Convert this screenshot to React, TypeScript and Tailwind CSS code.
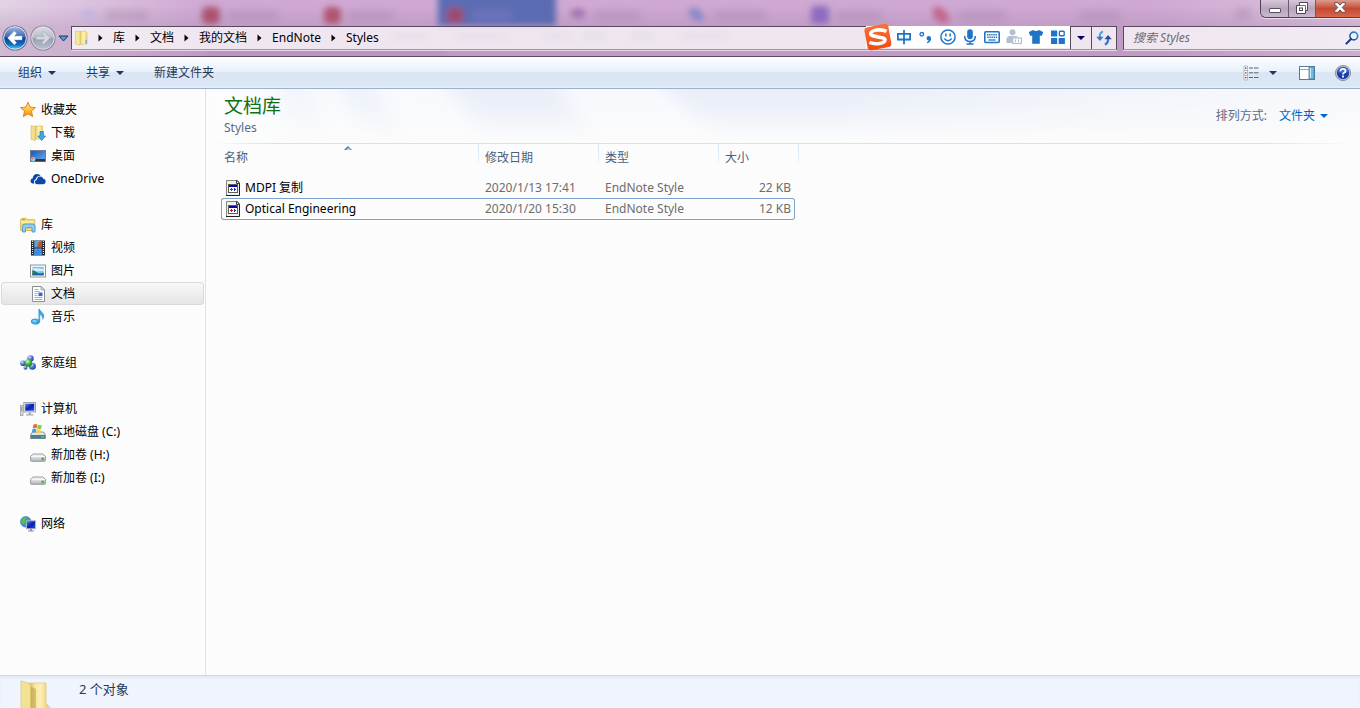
import React from "react";

type IconProps = { className?: string };

function Tri({ className = "" }: IconProps) {
  return (
    <svg viewBox="0 0 8 4" className={`h-1 w-2 shrink-0 ${className}`} aria-hidden="true">
      <path d="M0 0h8L4 4z" fill="currentColor" />
    </svg>
  );
}

function Icon({ children, className = "size-4" }: { children: React.ReactNode; className?: string }) {
  return (
    <svg viewBox="0 0 16 16" className={`shrink-0 ${className}`} aria-hidden="true">
      {children}
    </svg>
  );
}

function Gradients() {
  return (
    <svg className="absolute size-0" aria-hidden="true">
      <defs>
        <linearGradient id="folder" x1="0" x2="1" y1="0" y2="0">
          <stop offset="0" stopColor="#d9bc5c" />
          <stop offset=".3" stopColor="#f6e69c" />
          <stop offset=".6" stopColor="#fbf0b4" />
          <stop offset="1" stopColor="#ecd274" />
        </linearGradient>
        <linearGradient id="star" x1="0" x2="0" y1="0" y2="1">
          <stop offset="0" stopColor="#fff0a0" />
          <stop offset=".5" stopColor="#fdc33e" />
          <stop offset="1" stopColor="#f28a1c" />
        </linearGradient>
        <linearGradient id="screen" x1="0" x2="1" y1="0" y2="1">
          <stop offset="0" stopColor="#1c50b4" />
          <stop offset="1" stopColor="#6fb0f0" />
        </linearGradient>
        <linearGradient id="monitor" x1="0" x2="1" y1="0" y2="1">
          <stop offset="0" stopColor="#5b83ee" />
          <stop offset=".5" stopColor="#0a1fb4" />
          <stop offset="1" stopColor="#2a50d8" />
        </linearGradient>
        <linearGradient id="drive" x1="0" x2="0" y1="0" y2="1">
          <stop offset="0" stopColor="#fafafa" />
          <stop offset="1" stopColor="#b4b6bb" />
        </linearGradient>
        <linearGradient id="note" x1="0" x2="1" y1="0" y2="1">
          <stop offset="0" stopColor="#1579c4" />
          <stop offset=".6" stopColor="#45aee6" />
          <stop offset="1" stopColor="#1466a8" />
        </linearGradient>
        <radialGradient id="ball" cx=".35" cy=".3" r=".8">
          <stop offset="0" stopColor="#d6e4ff" />
          <stop offset=".5" stopColor="#4a74cc" />
          <stop offset="1" stopColor="#16348c" />
        </radialGradient>
        <radialGradient id="greenBall" cx=".4" cy=".3" r=".8">
          <stop offset="0" stopColor="#d4f7b8" />
          <stop offset=".5" stopColor="#3fae3a" />
          <stop offset="1" stopColor="#12701e" />
        </radialGradient>
        <linearGradient id="back" x1="0" x2="0" y1="0" y2="1">
          <stop offset="0" stopColor="#9fb8e2" />
          <stop offset=".45" stopColor="#3c67b8" />
          <stop offset=".5" stopColor="#0b3c92" />
          <stop offset=".8" stopColor="#1273c8" />
          <stop offset="1" stopColor="#4fd4f8" />
        </linearGradient>
        <linearGradient id="forward" x1="0" x2="0" y1="0" y2="1">
          <stop offset="0" stopColor="#dcdbe4" />
          <stop offset=".48" stopColor="#b9bcc9" />
          <stop offset=".52" stopColor="#98a1b3" />
          <stop offset="1" stopColor="#b8bfcd" />
        </linearGradient>
        <linearGradient id="sogou" x1="0" x2="0" y1="0" y2="1">
          <stop offset="0" stopColor="#f8733a" />
          <stop offset="1" stopColor="#f04a12" />
        </linearGradient>
        <linearGradient id="lens" x1="0" x2="1" y1="1" y2="0">
          <stop offset="0" stopColor="#1c3f94" />
          <stop offset="1" stopColor="#3c93d8" />
        </linearGradient>
      </defs>
    </svg>
  );
}

const StarIcon = () => (
  <Icon>
    <path d="M8 .2l2.100 4.900 5.400.5-4.100 3.600 1.300 5.400L8 11.900l-4.700 2.700 1.300-5.400L.5 5.600l5.400-.5z" fill="url(#star)" stroke="#dd7c1c" strokeWidth=".9" />
  </Icon>
);
const DownloadIcon = () => (
  <Icon>
    <path d="M5 1h7.500v13H5z" fill="url(#folder)" stroke="#d3b556" strokeWidth=".6" />
    <path d="M1 .6l3.500.9q.8.300.8 1.200V15.600L1 14.500z" fill="#f3e08e" stroke="#d3b556" strokeWidth=".6" />
    <path d="M10 6.500h3.400v4.500h2.200l-3.900 4.500L7.800 11H10z" fill="#3fa9e6" stroke="#1d76b8" strokeWidth=".7" />
  </Icon>
);
const DesktopIcon = () => (
  <Icon>
    <rect x=".5" y="2.500" width="15" height="11" fill="url(#screen)" stroke="#6d7f96" />
    <rect x="5" y="11" width="10" height="2.300" fill="#2c3442" />
    <circle cx="3.200" cy="11.200" r="2.200" fill="#7ed0f6" />
    <path d="M2 11.200h1.200V10H2z" fill="#e8642c" />
    <path d="M3.200 12.400h1.200v-1.200H3.200z" fill="#f9c93a" />
  </Icon>
);
const OneDriveIcon = () => (
  <Icon>
    <path d="M4.300 12.600H3.200C1.700 12.600.5 11.500.5 10c0-1.300.9-2.300 2.100-2.500C2.700 5 4.600 3 7 3c1.500 0 2.800.7 3.600 1.800C7.300 4.400 5.800 7 5.900 8.300 4.100 8.600 3.500 10.500 4.300 12.600z" fill="#0a48ac" />
    <path d="M7.200 13.200c-1.500 0-2.400-1-2.400-2.100 0-1.300 1-2.100 2-2.200.1-2 1.500-3.400 3.300-3.400 1.500 0 2.600.8 3.100 2.200 1.400.1 2.500 1.200 2.500 2.700 0 1.600-1.200 2.800-2.700 2.800z" fill="#0a48ac" />
  </Icon>
);
const LibraryIcon = () => (
  <Icon>
    <path d="M.6 13.500V2.500L2 1.300h4.500l1 1.400h7.300v10.800z" fill="#f4dc7c" stroke="#cfae4a" strokeWidth=".8" />
    <path d="M1 5h13.500" stroke="#fff6c8" />
    <path d="M2 2.600h3" stroke="#6cb84e" />
    <path d="M2.500 15V9.500Q2.500 7 5 7h7.500Q15 7 15 9.500V15h-3v-3.300q0-1-1-1H6.500q-1 0-1 1V15z" fill="#8fcdf2" stroke="#3f8fc6" strokeWidth=".8" />
  </Icon>
);
const VideoIcon = () => (
  <Icon>
    <rect x="1" y=".5" width="14" height="15" fill="#24262c" />
    <path d="M4.300 1h7.400v6.500H4.300z" fill="#5fa6dc" />
    <path d="M4.300 8.500h7.400V15H4.300z" fill="#4fa4f0" />
    <path d="M8.500 2.500l3.200-1.500v6H7z" fill="#b0583c" />
    <path d="M4.300 12l3-3 4.400 2L9 15H4.300z" fill="#3d8be0" />
    <path d="M2.600 1v14M13.400 1v14" stroke="#e8ecf0" strokeWidth="1.200" strokeDasharray="1 1" />
  </Icon>
);
const PictureIcon = () => (
  <Icon>
    <rect x=".5" y="2" width="15" height="12" fill="#fff" stroke="#8c949c" />
    <rect x="2.300" y="3.800" width="11.400" height="8.400" fill="#7cc4ec" />
    <path d="M2.300 5.500q4-1 11.400.8V8l-11.400.5z" fill="#d6eefa" />
    <path d="M2.300 7q3 .5 5 2.500t6.400 0v2.700H2.300z" fill="#2c7a50" />
    <path d="M2.300 11q6-1 11.400 0v1.200H2.300z" fill="#1e64a8" />
  </Icon>
);
const DocumentIcon = () => (
  <Icon>
    <path d="M2.500.5H11l3.500 3.500v11.500h-12z" fill="#fff" stroke="#8a8f96" />
    <path d="M11 .5V4h3.500z" fill="#dfe3e8" stroke="#8a8f96" strokeWidth=".7" />
    <path d="M4.500 3.500h4M4.500 5.500h5M4.500 7.500h3M4.500 9.500h3M4.500 11.500h8M4.500 13.500h8" stroke="#9aa4b4" strokeWidth=".9" />
    <rect x="8.500" y="6.500" width="4" height="3.600" fill="#2f6fc0" />
  </Icon>
);
const MusicIcon = () => (
  <Icon>
    <path d="M8.500 0h1.400c.2 2.500 4 3.300 4.200 6.500.1 1.800-.6 3.200-1.600 4.400.2-2.800-.6-4.300-2.300-5V12c0 2.100-2.200 3.700-4.900 3.700S.8 14.400.8 12.600s2-3.100 4.700-3.100c1.200 0 2.200.2 3 .7z" fill="url(#note)" />
    <ellipse cx="4.500" cy="12" rx="2.200" ry="1.100" fill="#8bd3f6" />
  </Icon>
);
const HomegroupIcon = () => (
  <Icon>
    <circle cx="3" cy="8.300" r="2.800" fill="url(#ball)" />
    <circle cx="10.500" cy="3.500" r="3.200" fill="url(#ball)" />
    <circle cx="12.400" cy="11.300" r="3.500" fill="url(#ball)" />
    <circle cx="5.500" cy="12.800" r="2" fill="url(#ball)" />
    <circle cx="8.300" cy="8" r="3.800" fill="url(#greenBall)" />
  </Icon>
);
const ComputerIcon = () => (
  <Icon>
    <rect x=".5" y="4.500" width="2.500" height="10" fill="#d9dcdf" stroke="#8e9499" strokeWidth=".7" />
    <path d="M1.700 6v4" stroke="#64b848" />
    <rect x="3.800" y="1.400" width="11.700" height="9.600" fill="#e4e6ea" stroke="#8e9499" strokeWidth=".8" />
    <rect x="5.200" y="2.700" width="9" height="7" fill="url(#monitor)" />
    <path d="M8.500 11.400h2.500v1.800h2.500v1.200H6v-1.200h2.500z" fill="#a9adb3" />
  </Icon>
);
const SystemDriveIcon = () => (
  <Icon>
    <path d="M.6 11l2-3h10.800l2 3v3.500H.6z" fill="url(#drive)" stroke="#6b7a86" strokeWidth=".8" />
    <rect x="1" y="11" width="14" height="3.500" fill="#4c7f96" />
    <path d="M11.500 12.800h2" stroke="#6fe05a" strokeWidth="1.500" />
    <path d="M3.500.5q2-1 3.800 0L6.600 4.300q-2-1-3.900 0z" fill="#ec6b35" />
    <path d="M7.900.8q2 .9 4-.1L11.100 4.700q-2 .9-4-.1z" fill="#8cc84c" />
    <path d="M2.500 5q2-.9 3.900 0L5.700 8.800q-2-1-3.900 0z" fill="#4a9be0" />
    <path d="M7 5.300q2 .9 4-.1l-.8 3.900q-2 .9-4-.1z" fill="#fbcf3c" />
  </Icon>
);
const DriveIcon = () => (
  <Icon>
    <path d="M.6 9.200l2.600-2.200h9.600l2.600 2.200v4.300q0 .8-.8.8H1.400q-.8 0-.8-.8z" fill="url(#drive)" stroke="#84868c" strokeWidth=".8" />
    <path d="M1 9.600h14" stroke="#fff" strokeWidth=".8" />
    <rect x="11.500" y="10.600" width="2.300" height="2.600" fill="#42b428" />
  </Icon>
);
const NetworkIcon = () => (
  <Icon>
    <circle cx="5.800" cy="5.800" r="5.300" fill="#3a8ede" stroke="#2b6eb4" strokeWidth=".6" />
    <path d="M2 3q3-3 5-1.500L5 4l1 2-3 2.500L1 6zM8 2l2.500 2-2 2zM5 8l2 1-1 2z" fill="#58c04c" />
    <rect x="6.500" y="4.800" width="9" height="8" fill="url(#monitor)" stroke="#b3bac4" strokeWidth=".9" />
    <path d="M10 13h2v1.500h2v1H8v-1h2z" fill="#8d939b" />
  </Icon>
);

const StyleFileIcon = () => (
  <Icon>
    <path d="M1 0h11v1h1v1h1v1h1v13H1z" fill="#f1f1ec" />
    <path d="M1.500 15.500V.5H12" fill="none" stroke="#858585" />
    <path d="M14.500 3v12.500H1" fill="none" stroke="#1e1e1e" />
    <path d="M11.500 0v3.500H15M12 1h1v1h1v1" fill="none" stroke="#3a3a3a" />
    <rect x="3" y="4" width="10" height="9" fill="#5c5c5c" />
    <rect x="4" y="5" width="8" height="2" fill="#0808a8" />
    <rect x="4" y="7" width="8" height="5" fill="#fff" />
    <path d="M5 9h1v1H5zM6 8h1v3H6z" fill="#d01818" />
    <path d="M10 9h1v1h-1zM9 8h1v3H9z" fill="#1030d0" />
    <path d="M7 9h1v1H7z" fill="#d01818" />
  </Icon>
);

type NavItem = { label: string; icon: React.ReactNode; selected?: boolean };
type NavGroup = { head: NavItem; items: NavItem[] };

const groups: NavGroup[] = [
  {
    head: { label: "收藏夹", icon: <StarIcon /> },
    items: [
      { label: "下载", icon: <DownloadIcon /> },
      { label: "桌面", icon: <DesktopIcon /> },
      { label: "OneDrive", icon: <OneDriveIcon /> },
    ],
  },
  {
    head: { label: "库", icon: <LibraryIcon /> },
    items: [
      { label: "视频", icon: <VideoIcon /> },
      { label: "图片", icon: <PictureIcon /> },
      { label: "文档", icon: <DocumentIcon />, selected: true },
      { label: "音乐", icon: <MusicIcon /> },
    ],
  },
  { head: { label: "家庭组", icon: <HomegroupIcon /> }, items: [] },
  {
    head: { label: "计算机", icon: <ComputerIcon /> },
    items: [
      { label: "本地磁盘 (C:)", icon: <SystemDriveIcon /> },
      { label: "新加卷 (H:)", icon: <DriveIcon /> },
      { label: "新加卷 (I:)", icon: <DriveIcon /> },
    ],
  },
  { head: { label: "网络", icon: <NetworkIcon /> }, items: [] },
];

const files = [
  { name: "MDPI 复制", date: "2020/1/13 17:41", type: "EndNote Style", size: "22 KB", focused: false },
  { name: "Optical Engineering", date: "2020/1/20 15:30", type: "EndNote Style", size: "12 KB", focused: true },
];

const crumbs = ["库", "文档", "我的文档", "EndNote", "Styles"];

function GlassBackdrop() {
  return (
    <svg className="absolute inset-0 size-full" viewBox="0 0 1360 56" preserveAspectRatio="none" aria-hidden="true">
      <defs>
        <linearGradient id="glass" x1="0" x2="1" y1="0" y2="0">
          <stop offset="0" stopColor="#e3d2e5" />
          <stop offset=".06" stopColor="#dcc3df" />
          <stop offset=".15" stopColor="#cfa9d3" />
          <stop offset=".85" stopColor="#cfa9d3" />
          <stop offset="1" stopColor="#dcc4de" />
        </linearGradient>
        <linearGradient id="shade" x1="0" x2="0" y1="0" y2="1">
          <stop offset=".1" stopColor="#8a6a90" stopOpacity="0" />
          <stop offset=".5" stopColor="#8a6a90" stopOpacity=".22" />
          <stop offset="1" stopColor="#8a6a90" stopOpacity=".22" />
        </linearGradient>
        <filter id="soft" x="-20%" y="-50%" width="140%" height="200%">
          <feGaussianBlur stdDeviation="4" />
        </filter>
        <filter id="softer" x="-20%" y="-50%" width="140%" height="200%">
          <feGaussianBlur stdDeviation="3" />
        </filter>
      </defs>
      <rect width="1360" height="56" fill="url(#glass)" />
      <rect width="1360" height="56" fill="url(#shade)" />
      <g filter="url(#softer)">
        <rect x="438" y="-10" width="118" height="36" fill="#5c6cb2" />
        <rect x="447" y="8" width="16" height="15" rx="4" fill="#a04a6c" />
        <rect x="202" y="7" width="18" height="17" rx="5" fill="#ab526e" />
        <rect x="324" y="7" width="17" height="17" rx="5" fill="#b0546e" />
        <rect x="811" y="6" width="18" height="18" rx="3" fill="#8d6cc0" />
        <path d="M689 8h8l7 7v6h-8l-7-6z" fill="#8a86c8" />
        <rect x="571" y="9" width="14" height="9" rx="4" fill="#a270b0" />
        <path d="M933 7h8l8 8v8h-9l-7-6z" fill="#c3688c" />
        <rect x="82" y="10" width="14" height="11" rx="4" fill="#c3b4e0" />
      </g>
      <g filter="url(#soft)" fill="#a585ad" opacity=".45">
        <rect x="106" y="11" width="42" height="9" />
        <rect x="228" y="11" width="50" height="9" />
        <rect x="348" y="11" width="46" height="9" />
        <rect x="472" y="11" width="40" height="9" fill="#8a80c8" />
        <rect x="594" y="11" width="46" height="9" />
        <rect x="714" y="11" width="52" height="9" />
        <rect x="836" y="11" width="46" height="9" />
        <rect x="958" y="11" width="48" height="9" />
        <rect x="1080" y="11" width="40" height="9" />
        <rect x="1235" y="8" width="16" height="12" />
        <rect x="205" y="50" width="240" height="6" />
      </g>
      <g filter="url(#softer)" fill="#8a7490" opacity=".45">
        <rect x="392" y="32" width="38" height="9" />
        <rect x="456" y="32" width="52" height="9" />
        <rect x="542" y="32" width="30" height="9" />
        <rect x="582" y="31" width="24" height="11" />
        <rect x="630" y="31" width="24" height="11" />
        <rect x="680" y="32" width="50" height="9" />
      </g>
    </svg>
  );
}

function NavButtons() {
  return (
    <div className="flex w-[71px] shrink-0 items-center pl-0.5">
      <button aria-label="后退" className="shrink-0">
        <svg viewBox="0 0 26 26" className="size-[26px]" aria-hidden="true">
          <circle cx="13" cy="13" r="12.600" fill="#4c4c66" opacity=".7" />
          <circle cx="13" cy="13" r="11.300" fill="url(#back)" stroke="#e9f0fa" strokeWidth=".9" />
          <path d="M5.800 13L12.300 6.400l2 2-2.600 2.900h8.200v3.400h-8.200l2.600 2.900-2 2z" fill="#fff" stroke="#fff" strokeLinejoin="round" strokeWidth=".6" />
        </svg>
      </button>
      <button aria-label="前进" className="ml-0.5 shrink-0">
        <svg viewBox="0 0 26 26" className="size-[26px]" aria-hidden="true">
          <circle cx="13" cy="13" r="12.600" fill="#77708a" opacity=".75" />
          <circle cx="13" cy="13" r="11.300" fill="url(#forward)" stroke="#e6e3ec" strokeWidth=".9" />
          <path d="M20.200 13l-6.500-6.600-2 2 2.600 2.900H6.100v3.400h8.200l-2.600 2.900 2 2z" fill="#d4d7e0" stroke="#9ea4b5" strokeLinejoin="round" strokeWidth=".6" />
        </svg>
      </button>
      <button aria-label="最近浏览的位置" className="ml-0.5">
        <svg viewBox="0 0 11 7" className="h-[7px] w-[11px]" aria-hidden="true">
          <path d="M1 1h9L5.500 6z" fill="#4b9cd8" stroke="#1c3468" strokeLinejoin="round" />
        </svg>
      </button>
    </div>
  );
}

function ImeButton({ label, children }: { label: string; children: React.ReactNode }) {
  return (
    <button aria-label={label} className="flex h-full w-[22px] items-center justify-center text-[#1f74c8]">
      {children}
    </button>
  );
}

function InputMethodBar() {
  return (
    <div className="-mt-px flex h-[22px] shrink-0 items-center bg-white pr-px">
      <button aria-label="搜狗输入法" className="-my-1 -ml-0.5 mr-px shrink-0">
        <svg viewBox="0 0 28 28" className="size-7" aria-hidden="true">
          <path d="M3 4.500L20.500.8q3-.6 3.800 2.400l3 16.800q.5 3.200-2.500 3.900L7.500 27.300q-3 .5-3.800-2.400L.5 8.200Q0 5.200 3 4.500z" fill="url(#sogou)" />
          <path d="M22.500 8.300C17 5.800 7.500 6.800 6.800 10.600c-.5 4 14.600 2.600 14.200 6.500-.4 3.600-9.300 4.800-15.600 2.300" fill="none" stroke="#fff" strokeWidth="3.600" />
        </svg>
      </button>
      <ImeButton label="中文">
        <Icon>
          <path d="M1.900 4.900h12.200v5.600H1.900zM8 1v14.200" fill="none" stroke="currentColor" strokeWidth="1.800" />
        </Icon>
      </ImeButton>
      <ImeButton label="中文标点">
        <Icon>
          <circle cx="3.800" cy="5.300" r="1.800" fill="none" stroke="currentColor" strokeWidth="1.300" />
          <circle cx="10.800" cy="9.300" r="2.200" fill="currentColor" />
          <path d="M13 9.300q.2 3.600-3.700 5l-.5-1q2.200-1.200 2.200-3z" fill="currentColor" />
        </Icon>
      </ImeButton>
      <ImeButton label="表情">
        <Icon>
          <circle cx="8" cy="8" r="7.100" fill="none" stroke="currentColor" strokeWidth="1.500" />
          <path d="M5.900 4.500v3M10.100 4.500v3" stroke="currentColor" strokeWidth="1.500" />
          <path d="M4.300 9.500q3.700 4.500 7.400 0" fill="none" stroke="currentColor" strokeWidth="1.300" />
        </Icon>
      </ImeButton>
      <ImeButton label="语音">
        <Icon>
          <rect x="5.200" y=".3" width="5.600" height="10" rx="2.800" fill="currentColor" />
          <path d="M2.800 7v1.300q.5 4 5.200 4.200 4.700-.2 5.200-4.200V7M8 12v3M4.500 15h7" fill="none" stroke="currentColor" strokeWidth="1.500" />
        </Icon>
      </ImeButton>
      <ImeButton label="软键盘">
        <Icon>
          <rect x=".8" y="2.800" width="14.400" height="10.700" rx="1" fill="none" stroke="currentColor" strokeWidth="1.600" />
          <path d="M3 5.700h10M3.300 8.200h10" stroke="currentColor" strokeWidth="1.400" strokeDasharray="1.400 .7" />
          <path d="M4.500 11h7" stroke="currentColor" strokeWidth="1.300" />
        </Icon>
      </ImeButton>
      <ImeButton label="登录">
        <Icon className="size-4 text-[#b4bfd2]">
          <circle cx="6.500" cy="3.300" r="3" fill="currentColor" />
          <path d="M.5 14V10q.5-3 3-3h6q2.500 0 3 1.500H6.500V14z" fill="currentColor" />
          <rect x="6.700" y="9" width="8.700" height="5.500" fill="#fff" stroke="currentColor" strokeWidth="1.200" />
          <path d="M9.500 10.500v2.800M12.500 10.500v2.800" stroke="currentColor" />
        </Icon>
      </ImeButton>
      <ImeButton label="皮肤">
        <Icon>
          <path d="M5 1q3 2 6 0l4.200 2-1.400 4-2-.5v8.300H4.200V6.500l-2 .5L.8 3z" fill="currentColor" />
        </Icon>
      </ImeButton>
      <ImeButton label="工具箱">
        <Icon>
          <path d="M1 1.500h6.200v6H1zM1 9h6.200v6H1zM8.700 9h6.200v6H8.700z" fill="currentColor" />
          <rect x="9.400" y="2.200" width="4.800" height="4.600" rx=".8" fill="none" stroke="currentColor" strokeWidth="1.400" />
        </Icon>
      </ImeButton>
    </div>
  );
}

function WindowButtons() {
  return (
    <div className="flex h-[18px] overflow-hidden rounded-bl-md border-b border-l border-[#4f4256] shadow-[0_1px_0_#e9d9ec]">
      <button aria-label="最小化" className="flex w-7 items-end justify-center border-r border-[#6a5b70] bg-linear-to-b from-[#d8c8da] via-[#b8a4bc] to-[#cbb8ce] pb-1">
        <span className="h-[5px] w-3 rounded-[1px] border border-[#55505c] bg-white" />
      </button>
      <button aria-label="向下还原" className="flex w-[27px] items-center justify-center border-r border-[#6a5b70] bg-linear-to-b from-[#d8c8da] via-[#b8a4bc] to-[#cbb8ce] pb-px">
        <svg viewBox="0 0 12 12" className="size-3" aria-hidden="true">
          <path d="M3.500.5h8v8h-2v3h-9v-8h3z" fill="#fff" stroke="#4d4854" />
          <path d="M3.500 3.500h6v5" fill="none" stroke="#4d4854" strokeWidth=".8" />
          <rect x="3.500" y="6" width="3" height="2.500" fill="#fff" stroke="#4d4854" />
        </svg>
      </button>
      <button aria-label="关闭" className="flex w-11 items-center justify-center bg-linear-to-b from-[#dd9a8c] via-[#c44a34] to-[#d9664a] pl-[3px] pb-0.5">
        <svg viewBox="0 0 12 11" className="h-[11px] w-3" aria-hidden="true">
          <path d="M.7.7h3.200L6 3.200 8.100.7h3.200v1.500L8.200 5.500l3.100 3.300v1.500H8.100L6 7.800l-2.100 2.500H.7V8.800l3.100-3.300L.7 2.200z" fill="#fff" stroke="#5b4650" strokeWidth=".9" />
        </svg>
      </button>
    </div>
  );
}

function TitleBar() {
  return (
    <header className="relative h-[57px] shrink-0 overflow-hidden border-b border-[#5d4a62]">
      <GlassBackdrop />
      <div className="relative flex justify-end">
        <WindowButtons />
      </div>
      <div className="relative mt-2 flex h-6 items-center">
        <NavButtons />
        <div className="flex h-6 min-w-0 flex-1 items-stretch border border-[#584a5e] border-b-[#a392a8] bg-white/75 shadow-[0_1px_0_#e6d6e8]">
          <nav aria-label="地址" className="flex items-center pl-[3px]">
            <svg viewBox="0 0 14 16" className="h-4 w-[13px]" aria-hidden="true">
              <path d="M5 .8h6.500L13 2v12.500L5 15z" fill="url(#folder)" stroke="#d8bd62" strokeWidth=".6" />
              <path d="M.5 .5l4 .8q1 .3 1 1.300V15.700L.5 14.500z" fill="#f5e596" stroke="#d8bd62" strokeWidth=".6" />
              <path d="M12 10v4" stroke="#5aaee8" strokeWidth="1.500" />
            </svg>
            {crumbs.map((crumb) => (
              <React.Fragment key={crumb}>
                <svg viewBox="0 0 25 8" className="h-2 w-[25px] shrink-0" aria-hidden="true">
                  <path d="M10.500.5v7l4-3.500z" fill="#000" />
                </svg>
                <a href="#" className="whitespace-nowrap">
                  {crumb}
                </a>
              </React.Fragment>
            ))}
          </nav>
          <div className="flex-1" />
          <InputMethodBar />
          <button aria-label="以前的位置" className="flex w-[22px] items-center justify-center border-x border-[#584a5e] text-[#000060]">
            <Tri />
          </button>
          <button aria-label="刷新" className="flex w-6 items-center justify-center">
            <Icon>
              <path d="M7 1.500Q3.500 2.500 3.800 7.500" fill="none" stroke="#49a4dc" strokeWidth="2.200" />
              <path d="M.3 6.800h7.200L3.900 11z" fill="#2c7cc8" />
              <path d="M8.800 14.500q3.500-1 3.300-6" fill="none" stroke="#3b74c4" strokeWidth="2.200" />
              <path d="M8.500 9.200h7.200L12.100 5z" fill="#2050a4" />
            </Icon>
          </button>
        </div>
        <label className="ml-1.5 flex h-6 w-[237px] shrink-0 items-center border border-r-0 border-[#584a5e] border-b-[#a392a8] bg-white/75 pl-[9px] pr-px shadow-[0_1px_0_#e6d6e8]">
          <input
            type="search"
            aria-label="搜索 Styles"
            placeholder="搜索 Styles"
            className="min-w-0 flex-1 bg-transparent outline-none placeholder:text-[#6e6a70] placeholder:italic"
          />
          <svg viewBox="0 0 14 14" className="size-3.5" aria-hidden="true">
            <circle cx="8.800" cy="5" r="3.900" fill="#e8f3fc" stroke="url(#lens)" strokeWidth="1.600" />
            <path d="M6 8L1.500 12.500" stroke="#1c3f94" strokeWidth="2.200" strokeLinecap="round" />
          </svg>
        </label>
      </div>
    </header>
  );
}

function Toolbar() {
  return (
    <div className="flex h-8 shrink-0 items-center border-b border-[#a0afca] bg-[linear-gradient(to_bottom,#fdfeff_0%,#e8f1fb_48%,#dbe5f3_49%,#dce7f5_92%,#e8effa_100%)] pl-[18px] pr-[9px] text-[#1e395b]">
      <div className="flex items-center gap-[30px]">
        <button className="flex items-center gap-1.5">
          组织
          <Tri />
        </button>
        <button className="flex items-center gap-1.5">
          共享
          <Tri />
        </button>
        <button>新建文件夹</button>
      </div>
      <div className="ml-auto flex items-center">
        <button aria-label="更改您的视图">
          <Icon>
            <path d="M1 1h3.500v14H1z" fill="#fff" stroke="#a3acba" strokeWidth=".8" />
            <path d="M1 5.500h3.500M1 10.300h3.500" stroke="#a3acba" />
            <path d="M2 3.200h1.500M2 12.700h1.500" stroke="#2f4f80" strokeWidth="1.300" />
            <path d="M2 7.900h1.500" stroke="#c42b1c" strokeWidth="1.300" />
            <path d="M6 3h4M11 3h4.500M6 7.800h4M11 7.800h4.500M6 12.500h4M11 12.500h4.500" stroke="#5a6578" />
          </Icon>
        </button>
        <button aria-label="更多选项" className="ml-2.5">
          <Tri />
        </button>
        <button aria-label="显示预览窗格" className="ml-[22px]">
          <Icon>
            <rect x=".5" y="1.500" width="15" height="13" fill="#fff" stroke="#56789c" />
            <path d="M1 4.500h9" stroke="#8fa8c2" />
            <path d="M10 2h5v12h-5z" fill="#6fbfe0" stroke="#56789c" strokeWidth=".8" />
            <path d="M11.500 3v10" stroke="#c7ecf8" />
          </Icon>
        </button>
        <button aria-label="获取帮助" className="ml-5">
          <Icon>
            <circle cx="8" cy="8" r="7.600" fill="#c9ccd4" stroke="#7b818f" strokeWidth=".8" />
            <circle cx="8" cy="8" r="6.200" fill="#1c3fae" />
            <path d="M2.200 7a6 6 0 0 1 11.600 0Q8 9 2.200 7z" fill="#5d86dc" opacity=".6" />
            <path d="M5.500 6.200q.1-2.300 2.500-2.300t2.500 2q0 1.200-1.400 1.900-1.100.5-1.100 1.700M8 10.600v1.800" fill="none" stroke="#fff" strokeWidth="1.800" />
          </Icon>
        </button>
      </div>
    </div>
  );
}

function NavRow({ item, nested }: { item: NavItem; nested?: boolean }) {
  return (
    <a
      href="#"
      className={`mx-px flex h-[23px] items-center gap-[5px] rounded-[3px] border whitespace-nowrap ${nested ? "pl-7" : "pl-[18px]"} ${
        item.selected ? "border-[#d9d9d9] bg-linear-to-b from-[#f8f8f8] to-[#e5e5e5]" : "border-transparent"
      }`}
    >
      {item.icon}
      <span>{item.label}</span>
    </a>
  );
}

function Sidebar() {
  return (
    <nav aria-label="导航窗格" className="flex w-[206px] shrink-0 flex-col gap-[23px] overflow-hidden border-r border-[#d6e5f5] pt-[9px]">
      {groups.map((group) => (
        <div key={group.head.label}>
          <NavRow item={group.head} />
          {group.items.map((item) => (
            <NavRow key={item.label} item={item} nested />
          ))}
        </div>
      ))}
    </nav>
  );
}

function LibraryHeader() {
  return (
    <div className="relative flex h-[54px] items-center justify-between pl-[18px] pr-8">
      <svg className="absolute inset-0 size-full" viewBox="0 0 1154 54" preserveAspectRatio="none" aria-hidden="true">
        <defs>
          <linearGradient id="mist" x1="0" x2="1" y1="0" y2="0">
            <stop offset="0" stopColor="#f3f6fb" stopOpacity="0" />
            <stop offset=".08" stopColor="#f1f5fb" />
            <stop offset=".25" stopColor="#e9eef8" />
            <stop offset=".55" stopColor="#e9eef8" />
            <stop offset="1" stopColor="#f0f4fa" stopOpacity=".4" />
          </linearGradient>
          <linearGradient id="fade" x1="0" x2="0" y1="0" y2="1">
            <stop offset="0" stopColor="#fcfcfc" stopOpacity="0" />
            <stop offset=".3" stopColor="#fcfcfc" stopOpacity=".15" />
            <stop offset="1" stopColor="#fcfcfc" />
          </linearGradient>
          <filter id="mistBlur">
            <feGaussianBlur stdDeviation="9" />
          </filter>
        </defs>
        <rect width="1154" height="54" fill="url(#mist)" />
        <g filter="url(#mistBlur)" fill="#fcfdfe" opacity=".75">
          <path d="M100-20h20l50 90h-45zM160-20h70l60 90h-80zM340-20h100l90 90H400zM0-20h60l30 90H0z" />
        </g>
        <rect width="1154" height="54" fill="url(#fade)" />
      </svg>
      <div className="relative">
        <h1 className="text-[19px] leading-6 text-[#0f7014]">文档库</h1>
        <p className="leading-5 text-[#5a6b85]">Styles</p>
      </div>
      <div className="relative flex items-center">
        <span className="text-[#5a6b85]">排列方式:</span>
        <button className="ml-3 flex items-center gap-[5px] text-[#0066cc]" aria-haspopup="menu">
          文件夹
          <Tri />
        </button>
      </div>
    </div>
  );
}

function HeaderCell({ children, className = "", span = 1 }: { children: React.ReactNode; className?: string; span?: number }) {
  return (
    <th
      scope="col"
      colSpan={span}
      className={`h-[33px] bg-[linear-gradient(to_bottom,#d5e4f5,#e3edf8_60%,#fcfcfc)] bg-[length:1px_22px] bg-right-top bg-no-repeat pb-[5px] text-left font-normal text-[#4c607a] ${className}`}
    >
      {children}
    </th>
  );
}

function FileTable() {
  return (
    <table className="ml-[15px] w-[578px] table-fixed border-separate border-spacing-0">
      <colgroup>
        <col className="w-[258px]" />
        <col className="w-[120px]" />
        <col className="w-[120px]" />
        <col className="w-[76px]" />
        <col className="w-[4px]" />
      </colgroup>
      <thead>
        <tr>
          <HeaderCell className="relative pl-[3px]">
            名称
            <svg viewBox="0 0 8 4" className="absolute left-[123px] top-0.5 h-1 w-2" aria-hidden="true">
              <path d="M4 0l4 4H0z" fill="#3f7f9e" />
              <path d="M4.500 1.500L7 4H2z" fill="#a4d4e8" />
            </svg>
          </HeaderCell>
          <HeaderCell className="pl-1.5">修改日期</HeaderCell>
          <HeaderCell className="pl-1.5">类型</HeaderCell>
          <HeaderCell className="pl-1.5" span={2}>
            大小
          </HeaderCell>
        </tr>
      </thead>
      <tbody className="text-[#6d6d6d]">
        {files.map((file) => {
          const line = file.focused ? "border-y border-[#7da2ce]" : "border-t border-transparent";
          return (
            <tr key={file.name} className={file.focused ? "h-[22px]" : "h-[21px]"}>
              <td className={`rounded-l-[3px] border-l p-0 pl-[3px] text-black ${line}`}>
                <span className="flex items-center gap-1">
                  <StyleFileIcon />
                  {file.name}
                </span>
              </td>
              <td className={`p-0 pl-1.5 ${line}`}>{file.date}</td>
              <td className={`p-0 pl-1.5 ${line}`}>{file.type}</td>
              <td className={`rounded-r-[3px] border-r p-0 pr-[3px] text-right ${line}`}>{file.size}</td>
              <td className="p-0" />
            </tr>
          );
        })}
      </tbody>
    </table>
  );
}

export default function App() {
  return (
    <div className="flex h-screen flex-col overflow-hidden bg-[#fcfcfc] font-['Noto_Sans','Noto_Sans_CJK_SC',sans-serif] text-xs text-black">
      <Gradients />
      <TitleBar />
      <Toolbar />
      <div className="flex min-h-0 flex-1">
        <Sidebar />
        <main className="min-w-0 flex-1">
          <LibraryHeader />
          <div className="mx-2 h-px bg-[linear-gradient(to_right,transparent,#d5e2f2_5%,#d5e2f2_92%,transparent)]" />
          <FileTable />
        </main>
      </div>
      <footer className="flex h-[33px] shrink-0 items-start overflow-hidden border-t border-[#ccd8ea] bg-[#f0f4fc] pl-5 text-[13px] text-[#1e395b] shadow-[inset_0_2px_2px_#e2eaf4]">
        <svg viewBox="0 0 34 30" className="mt-1 h-[30px] w-[34px] shrink-0" aria-hidden="true">
          <path d="M26 30V23l8 7z" fill="#d9dde4" />
          <path d="M9 3h17v20.500l2 2V30H9z" fill="url(#folder)" stroke="#d9bf66" strokeWidth=".6" />
          <path d="M10 6l6 3v21h-6z" fill="#b4953a" opacity=".5" />
          <path d="M1 .8l8 2.700q1.500.5 1.500 2.500V30H1z" fill="#f3e294" stroke="#d9bf66" strokeWidth=".6" />
        </svg>
        <p className="ml-[25px] leading-[26px]">2 个对象</p>
      </footer>
    </div>
  );
}
